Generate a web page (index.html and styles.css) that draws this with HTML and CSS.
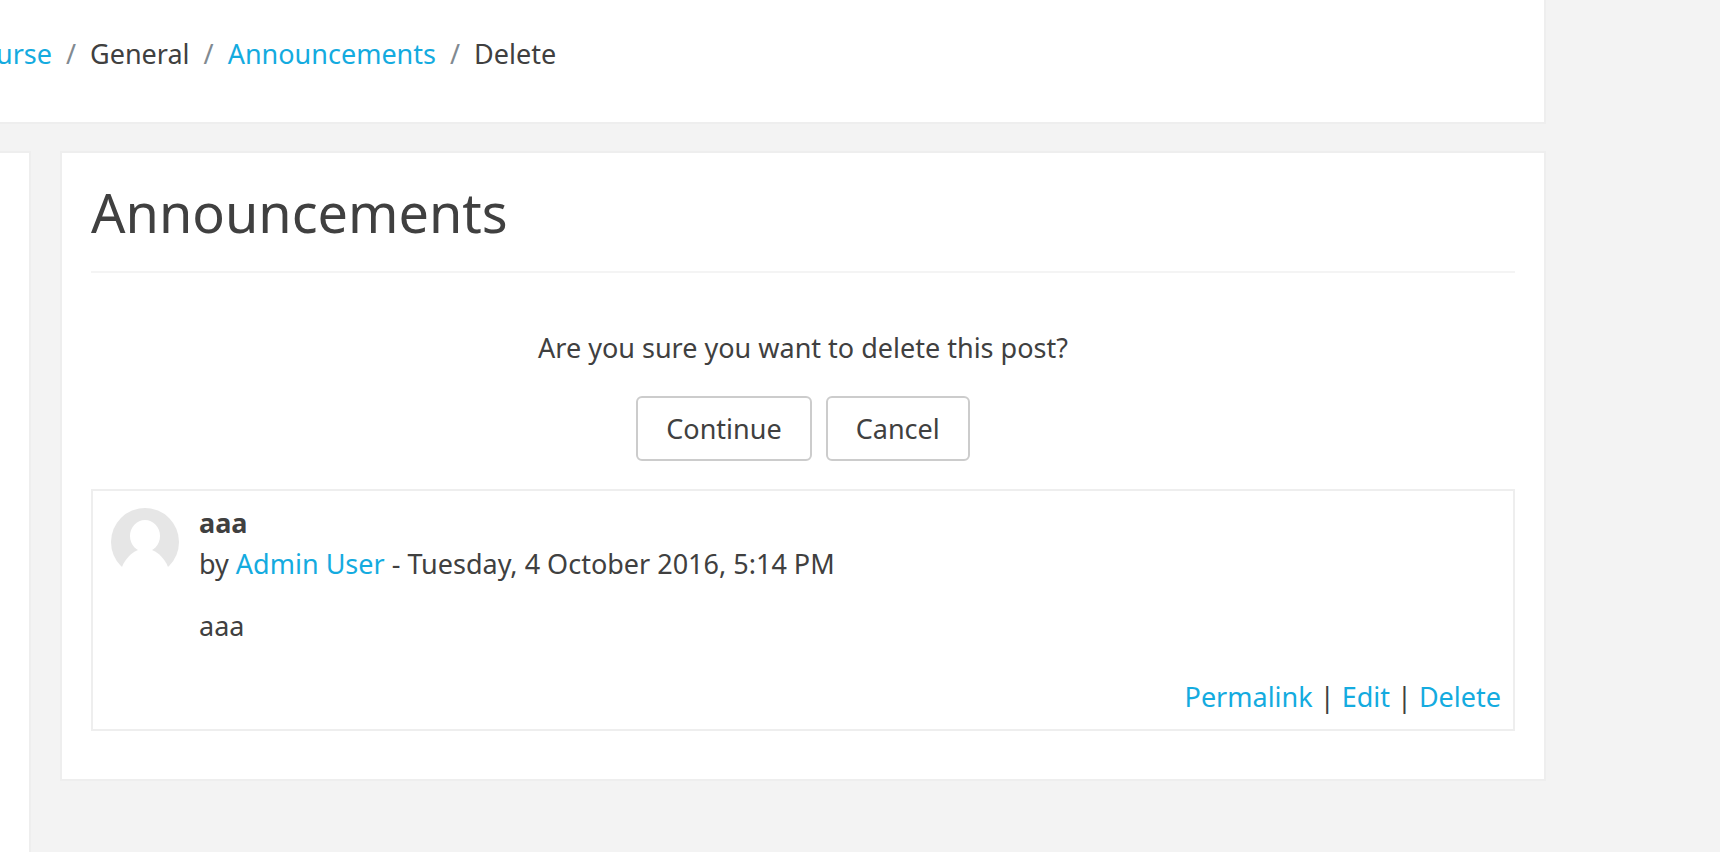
FILE: index.html
```html
<!DOCTYPE html>
<html lang="en">
<head>
    <meta charset="UTF-8">
    <meta name="viewport" content="width=device-width, initial-scale=1.0">
    <title>Announcements: Delete</title>
    <link rel="stylesheet" href="styles.css">
</head>
<body>
    <div class="page">
        <header class="page-header">
            <nav aria-label="Breadcrumb">
                <ol class="breadcrumb">
                    <li><a href="#">urse</a></li>
                    <li>General</li>
                    <li><a href="#">Announcements</a></li>
                    <li>Delete</li>
                </ol>
            </nav>
        </header>

        <div class="page-content">
            <aside class="sidebar"></aside>

            <main class="card">
                <h2>Announcements</h2>

                <div class="confirm">
                    <p>Are you sure you want to delete this post?</p>
                    <form class="buttons">
                        <button type="button" class="btn">Continue</button>
                        <button type="button" class="btn">Cancel</button>
                    </form>
                </div>

                <article class="post">
                    <svg class="avatar" viewBox="0 0 68 68" aria-hidden="true">
                        <circle cx="34" cy="34" r="34" fill="#e6e6e6"/>
                        <ellipse cx="34" cy="28" rx="15" ry="16" fill="#fff"/>
                        <path d="M11 59C14 51 20 45 27 42H41C48 45 54 51 57 59V68H11Z" fill="#fff"/>
                    </svg>
                    <div class="post-body">
                        <div class="subject">aaa</div>
                        <div class="author">by <a href="#">Admin User</a> - Tuesday, 4 October 2016, 5:14 PM</div>
                        <p class="message">aaa</p>
                    </div>
                    <div class="commands">
                        <a href="#">Permalink</a> | <a href="#">Edit</a> | <a href="#">Delete</a>
                    </div>
                </article>
            </main>
        </div>
    </div>
</body>
</html>
```
FILE: styles.css
```css
* {
    box-sizing: border-box;
}

body {
    margin: 0;
    background-color: #f3f3f3;
    color: #404040;
    font-family: "Noto Sans", "Open Sans", sans-serif;
    font-size: 27px;
    line-height: 41px;
}

a {
    color: #14abdf;
    text-decoration: none;
}

a:hover {
    text-decoration: underline;
}

p {
    margin: 0;
}

.page {
    display: flex;
    flex-direction: column;
    min-height: 100vh;
    margin-right: 174px;
}

.page-header {
    padding: 33px 0 48px;
    background-color: #fff;
    border: solid #eeeeee;
    border-width: 0 2px 2px 0;
    overflow: hidden;
}

.breadcrumb {
    display: flex;
    margin: 0 0 0 -4px;
    padding: 0;
    list-style: none;
}

.breadcrumb li + li::before {
    content: "/";
    padding: 0 14px;
    color: #818a91;
}

.page-content {
    display: flex;
    flex: 1;
    gap: 29px;
    padding-top: 27px;
}

.sidebar {
    width: 31px;
    background-color: #fff;
    border: solid #eeeeee;
    border-width: 2px 2px 0 0;
}

.card {
    flex: 1;
    align-self: flex-start;
    padding: 28px 29px 48px;
    background-color: #fff;
    border: 2px solid #eeeeee;
}

h2 {
    margin: 0;
    padding-bottom: 28px;
    border-bottom: 2px solid #f4f4f4;
    font-size: 54px;
    font-weight: 400;
    line-height: 62px;
}

.confirm {
    padding: 54px 0 28px;
    text-align: center;
}

.buttons {
    display: flex;
    justify-content: center;
    gap: 14px;
    margin-top: 28px;
}

.btn {
    padding: 10px 28px;
    background-color: #fff;
    border: 2px solid #cccccc;
    border-radius: 6px;
    color: inherit;
    font: inherit;
    cursor: pointer;
}

.btn:hover {
    background-color: #e6e6e6;
}

.post {
    display: grid;
    grid-template-columns: 68px 1fr;
    column-gap: 20px;
    padding: 11px 12px 12px 18px;
    border: 2px solid #eeeeee;
}

.avatar {
    width: 68px;
    height: 68px;
    margin-top: 6px;
}

.subject {
    font-weight: 700;
}

.message {
    margin-top: 21px;
}

.commands {
    grid-column: 1 / -1;
    margin-top: 30px;
    text-align: right;
}
```
